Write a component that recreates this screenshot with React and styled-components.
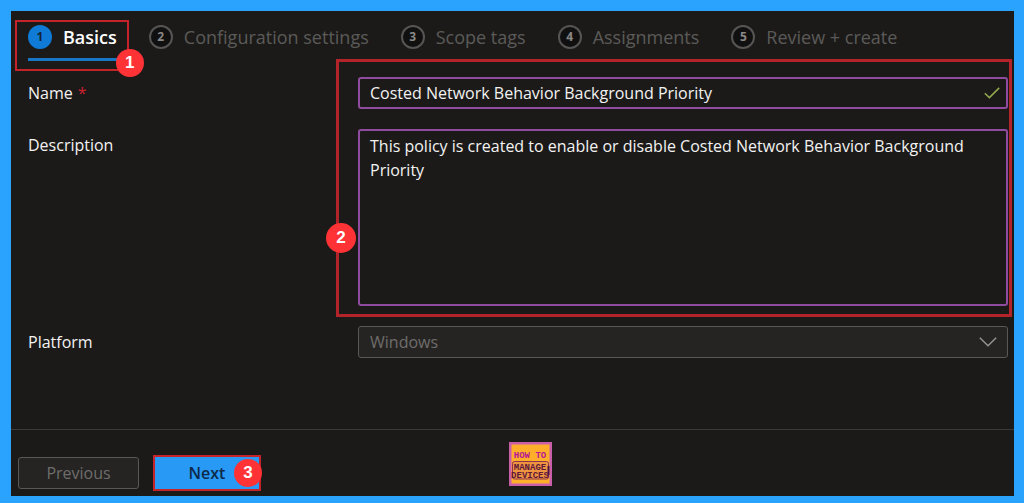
import React, { useState } from 'react';
import styled, { createGlobalStyle } from 'styled-components';

const GlobalStyle = createGlobalStyle`
    * {
        box-sizing: border-box;
    }
    body {
        margin: 0;
        background: #2aa3ff;
    }
    body, button, input, textarea, select {
        font-family: 'Open Sans', 'Noto Sans', sans-serif;
        font-size: 16px;
    }
`;

const Frame = styled.div`
    display: flex;
    min-height: 100vh;
    padding: 11px 10px 7px 11px;
    background: #2aa3ff;
`;
const Panel = styled.main`
    display: flex;
    flex: 1;
    flex-direction: column;
    min-width: 0;
    background: #1b1a19;
    color: #f3f2f1;
`;

const StepList = styled.nav`
    display: flex;
    align-items: flex-start;
    gap: 32px;
    padding: 13px 17px 0;
`;
const Step = styled.a`
    position: relative;
    display: flex;
    align-items: center;
    gap: 11px;
    height: 37px;
    padding-bottom: 9px;
    border-bottom: 3px solid ${({ $active }) => ($active ? '#1777c4' : 'transparent')};
    color: ${({ $active }) => ($active ? '#ffffff' : '#5b5a58')};
    font-size: 18px;
    font-weight: ${({ $active }) => ($active ? 600 : 400)};
    line-height: 24px;
    white-space: nowrap;
    text-decoration: none;
`;
const StepNumber = styled.span`
    display: flex;
    align-items: center;
    justify-content: center;
    width: 24px;
    height: 24px;
    border: 2px solid ${({ $active }) => ($active ? '#0f7bd6' : '#565553')};
    border-radius: 50%;
    background: ${({ $active }) => ($active ? '#0f7bd6' : '#111010')};
    color: ${({ $active }) => ($active ? '#12243a' : '#8a8886')};
    font-size: 12px;
    font-weight: 700;
    line-height: 16px;
`;

const Form = styled.form`
    display: grid;
    grid-template-columns: 330px minmax(0, 1fr);
    row-gap: 20px;
    padding: 16px 6px 0 17px;
`;
const Label = styled.label`
    grid-column: 1;
    padding-top: 4px;
    line-height: 24px;
`;
const Required = styled.span`
    margin-left: 5px;
    color: #d1202f;
`;
const Field = styled.div`
    grid-column: 2;
    grid-row: ${({ $row }) => $row};
    display: grid;
    align-items: center;

    > * {
        grid-area: 1 / 1;
    }
    > svg {
        justify-self: end;
        margin-right: ${({ $iconGap }) => $iconGap || 0}px;
        pointer-events: none;
    }
`;
const TextInput = styled.input`
    width: 100%;
    height: 32px;
    padding: 0 40px 0 10px;
    border: 2px solid #8f4b9e;
    border-radius: 3px;
    outline: none;
    background: #1b1a19;
    color: #f3f2f1;
`;
const TextArea = styled.textarea`
    display: block;
    width: 100%;
    height: 177px;
    padding: 3px 10px;
    border: 2px solid #8f4b9e;
    border-radius: 3px;
    outline: none;
    resize: none;
    background: #1b1a19;
    color: #f3f2f1;
    line-height: 24px;
`;
const Select = styled.select`
    appearance: none;
    width: 100%;
    height: 32px;
    padding: 0 40px 0 11px;
    border: 1px solid #5a5857;
    border-radius: 3px;
    background: #252423;
    color: #6f6d6b;
    opacity: 1;
`;

// red outline laid over the part that a numbered callout points at
const Outline = styled.span`
    position: absolute;
    inset: ${({ $inset }) => $inset};
    border: 2px solid #c5232a;
    pointer-events: none;
`;
const FieldsOutline = styled.div`
    position: relative;
    grid-column: 2;
    grid-row: 1 / 3;
    z-index: 1;
    margin: -18px -4px -11px -22px;
    border: 3px solid #b3242a;
    pointer-events: none;
`;
const Badge = styled.span`
    position: absolute;
    z-index: 2;
    top: ${({ $top }) => $top};
    left: ${({ $left }) => $left};
    display: flex;
    align-items: center;
    justify-content: center;
    width: ${({ $size }) => $size || 28}px;
    height: ${({ $size }) => $size || 28}px;
    border-radius: 50%;
    transform: translate(-50%, -50%);
    background: #ff3236;
    color: #ffffff;
    font-family: 'Liberation Sans', Arial, sans-serif;
    font-size: 17px;
    font-weight: 700;
`;

const Footer = styled.footer`
    display: grid;
    grid-template-columns: 491px auto;
    align-items: start;
    margin-top: auto;
    padding: 12px 7px 7px;
    border-top: 1px solid #3a3938;
`;
const Actions = styled.div`
    display: flex;
    gap: 16px;
    padding-top: 15px;
`;
const Button = styled.button`
    display: block;
    height: 32px;
    width: ${({ $primary }) => ($primary ? 104 : 121)}px;
    padding: 0;
    border: 1px solid ${({ $primary }) => ($primary ? '#2899f5' : '#5a5857')};
    border-radius: ${({ $primary }) => ($primary ? 0 : 3)}px;
    background: ${({ $primary }) => ($primary ? '#2899f5' : '#252423')};
    color: ${({ $primary }) => ($primary ? '#0c2a4a' : '#6f6d6b')};
    font-weight: ${({ $primary }) => ($primary ? 600 : 400)};
`;
const ActionWrapper = styled.div`
    position: relative;
`;

const CheckIcon = () => (
    <svg width="16" height="12" viewBox="0 0 16 12" fill="none" stroke="#92a94e" strokeWidth="1.5" aria-hidden="true">
        <path d="M0.8 6.2 5.4 10.6 15.2 0.9" />
    </svg>
);

const ChevronIcon = () => (
    <svg width="18" height="10" viewBox="0 0 18 10" fill="none" stroke="#979593" strokeWidth="1.4" aria-hidden="true">
        <path d="M0.8 0.8 9 8.8 17.2 0.8" />
    </svg>
);

const Logo = () => (
    <svg width="43" height="44" viewBox="0 0 43 44" role="img" aria-label="How to manage devices">
        <rect width="43" height="44" fill="#c95fa8" />
        <rect x="2.5" y="2.5" width="38" height="39" fill="#ffae2b" />
        <rect x="3.5" y="19.5" width="36" height="17.5" rx="2" fill="#ee9440" stroke="#8b3450" />
        <path d="M39.5 24v9" stroke="#4b1048" strokeWidth="2" />
        <g fontWeight="700" textAnchor="middle">
            <text x="21" y="15.5" fontFamily="'Liberation Sans Narrow', 'Liberation Mono', monospace" fontSize="9" fill="#b41596">HOW TO</text>
            <text x="21" y="28" fontFamily="'Liberation Mono', monospace" fontSize="9" fill="#5e173b">MANAGE</text>
            <text x="21" y="36" fontFamily="'Liberation Mono', monospace" fontSize="9" fill="#5e173b">DEVICES</text>
        </g>
    </svg>
);

const steps = ['Basics', 'Configuration settings', 'Scope tags', 'Assignments', 'Review + create'];

const App = () => {
    const [name, setName] = useState('Costed Network Behavior Background Priority');
    const [description, setDescription] = useState(
        'This policy is created to enable or disable Costed Network Behavior Background Priority'
    );

    return (
        <>
            <GlobalStyle />
            <Frame>
                <Panel>
                    <StepList>
                        {steps.map((step, index) => {
                            const active = index === 0;
                            return (
                                <Step key={step} href="#" $active={active} aria-current={active ? 'step' : undefined}>
                                    <StepNumber $active={active}>{index + 1}</StepNumber>
                                    {step}
                                    {active && <Outline $inset="-4px -12px -13px -13px" />}
                                    {active && <Badge $top="39px" $left="calc(100% + 13px)">1</Badge>}
                                </Step>
                            );
                        })}
                    </StepList>

                    <Form>
                        <Label htmlFor="name">Name<Required>*</Required></Label>
                        <Field $row={1} $iconGap={8}>
                            <TextInput id="name" value={name} onChange={(e) => setName(e.target.value)} />
                            <CheckIcon />
                        </Field>

                        <Label htmlFor="description">Description</Label>
                        <Field $row={2}>
                            <TextArea
                                id="description"
                                spellCheck={false}
                                value={description}
                                onChange={(e) => setDescription(e.target.value)}
                            />
                        </Field>

                        <FieldsOutline>
                            <Badge $top="176px" $left="2px" $size={30}>2</Badge>
                        </FieldsOutline>

                        <Label htmlFor="platform">Platform</Label>
                        <Field $row={3} $iconGap={11}>
                            <Select id="platform" disabled>
                                <option>Windows</option>
                            </Select>
                            <ChevronIcon />
                        </Field>
                    </Form>

                    <Footer>
                        <Actions>
                            <Button type="button" disabled>Previous</Button>
                            <ActionWrapper>
                                <Button type="button" $primary>Next</Button>
                                <Outline $inset="-2px" />
                                <Badge $top="50%" $left="calc(100% - 11px)">3</Badge>
                            </ActionWrapper>
                        </Actions>
                        <Logo />
                    </Footer>
                </Panel>
            </Frame>
        </>
    );
};

export default App;
